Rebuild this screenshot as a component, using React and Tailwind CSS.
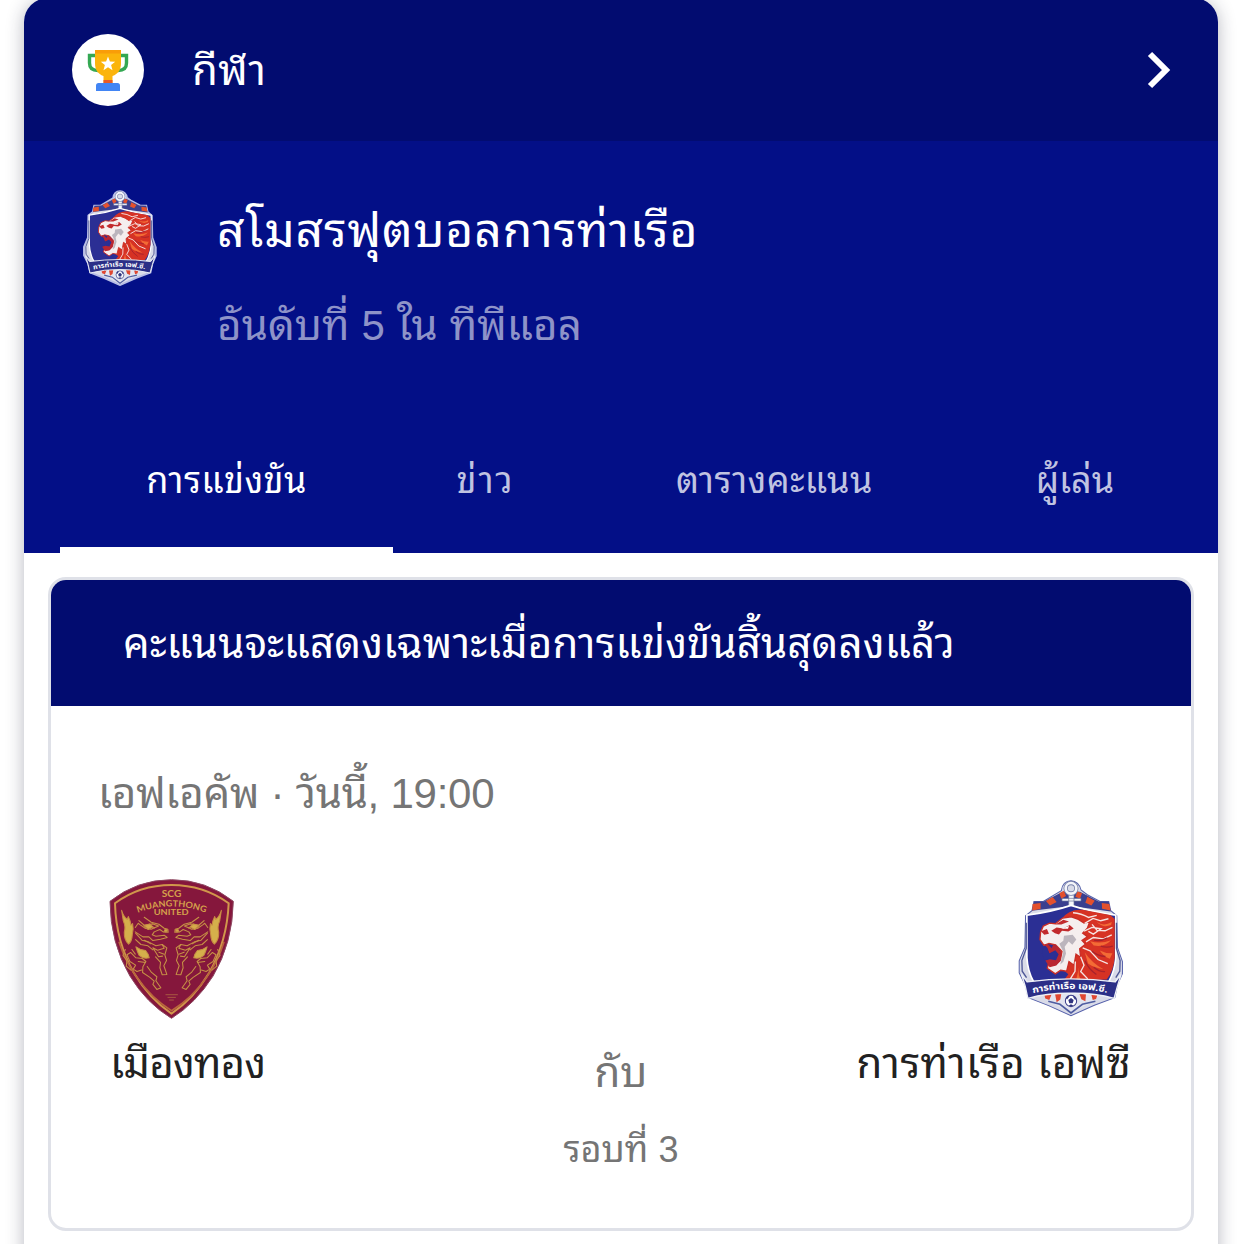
import React from 'react';

const tabs = [
  { label: 'การแข่งขัน', cell: 'w-[333px]', text: 'text-white tracking-[0.4px]', active: true },
  { label: 'ข่าว', cell: 'w-[185px]', text: 'text-[#c0c3e1] tracking-[2px]' },
  { label: 'ตารางคะแนน', cell: 'w-[390px]', text: 'text-[#c0c3e1] tracking-[0.5px] pl-[3px]' },
  { label: 'ผู้เล่น', cell: 'w-[214px]', text: 'text-[#c0c3e1]' },
];

function Trophy() {
  return (
    <svg viewBox="0 0 72 72" className="h-[72px] w-[72px]">
      <circle cx="36" cy="36" r="36" fill="#fff" />
      <path
        d="M25 21.5H17.5V29Q17.5 36.5 26 36.5M47 21.5H54.5V29Q54.5 36.5 46 36.5"
        fill="none"
        stroke="#34a853"
        strokeWidth="3.4"
      />
      <path d="M23 16H49V29C49 36 46 40 40.5 42V49H31.5V42C26 40 23 36 23 29Z" fill="#fbb40b" />
      <path d="M23 16H49V19.5H23Z" fill="#f99d08" />
      <path d="M31.5 46H40.5V49.5H31.5Z" fill="#ea5b25" />
      <path d="M24 57V51.5Q24 49 26.5 49H45.5Q48 49 48 51.5V57Z" fill="#4285f4" />
      <path
        d="M36 22.5L37.9 27.5L43.2 27.8L39.1 31.1L40.5 36.2L36 33.3L31.5 36.2L32.9 31.1L28.8 27.8L34.1 27.5Z"
        fill="#fff"
      />
    </svg>
  );
}

function PortCrest({ className, halo }) {
  return (
    <svg viewBox="52 45 322 413" className={className}>
      <path
        d="M213 50C228 50 240 62 243 78L262 92L300 112H326L332 140L350 155L352 250L367 292V328L352 362L344 400L283 423L213 454L146 424L85 400L76 362L58 326V290L75 250L77 155L96 140L102 112H130L184 80C186 62 197 50 213 50Z"
        fill="#d9dbe8"
        stroke={halo ? '#b7bde6' : '#5560aa'}
        strokeWidth={halo ? 8 : 3}
      />
      <path d="M96 140L103 113L132 112L188 83H240L296 112L326 113L332 142L213 126Z" fill="#3a3f8f" />
      <path
        d="M138 111L158 99L170 114L150 124ZM178 88L192 80L198 96L184 104ZM232 82L246 88L240 104L226 98ZM262 98L284 110L274 124L256 116ZM98 120L122 117L122 135L97 139ZM305 117L328 120L331 139L306 134Z"
        fill="#e4512d"
      />
      <path d="M206 88H222V126H206ZM186 103H243V111H186Z" fill="#f4f5fa" stroke="#667199" strokeWidth="2" />
      <circle cx="213" cy="73" r="16" fill="none" stroke="#7882ab" strokeWidth="13" />
      <circle cx="213" cy="73" r="16" fill="none" stroke="#f4f5fa" strokeWidth="8" />
      <path d="M81 153Q150 145 213 124Q278 145 347 153V280Q344 320 326 352H101Q83 320 81 280Z" fill="#2b2f94" stroke="#fff" strokeWidth="5" />
      <path
        d="M183 166Q206 134 248 137L330 153L344 165V280Q340 320 320 346L190 350L205 330L180 308Z"
        fill="#d63224"
      />
      <path
        d="M122 204L130 186L149 177L166 179L188 162L214 158L235 166L252 177L269 173L262 192L248 207L262 218L246 229L256 240L239 254L242 280L228 270L222 303L207 292L200 321L182 318L166 329L142 312L145 301L162 303L181 288L186 262L167 242L147 238L132 244L120 226Z"
        fill="#f5eeee"
        stroke="#c92d26"
        strokeWidth="4"
      />
      <path
        d="M132 240L142 251L148 268L166 258L176 270L168 288L150 285L136 289L149 309L169 304L181 291L185 268L173 249L160 241L155 252L146 242Z"
        fill="#b92732"
      />
      <path d="M128 246L142 252L148 268L164 262L169 272L160 285L148 282L134 288L126 270Z" fill="#2b2f94" />
      <path
        d="M123 201L141 195L147 209L133 212ZM154 200L170 190L190 193L209 183L221 193L205 202L186 200L177 211L165 207ZM166 181L190 167L207 172L184 181Z"
        fill="#c22a2d"
      />
      <path d="M184 194L207 186L204 194Z" fill="#fff" />
      <path d="M192 215L218 212L229 226L217 242L206 232L194 248L198 268L190 293L181 301L190 263L178 239L190 230Z" fill="#bcb5bd" />
      <path
        d="M219 146Q244 148 265 160L290 154M254 178L279 163L302 170L325 164M252 201L276 190L303 194L280 210L265 202M258 233L280 220L310 224L335 212M248 251L270 260L294 286L323 298M242 278L252 303L242 322L263 344M226 292L225 321L211 344M276 181L291 199L315 200L337 190"
        fill="none"
        stroke="#f6e5e3"
        strokeWidth="4"
      />
      <path
        d="M270 231Q302 240 333 228Q312 250 281 244ZM254 264Q275 296 310 315Q281 311 264 298ZM299 259Q316 268 337 267L329 284Q311 278 299 259ZM238 306Q231 336 246 350L228 348ZM290 174Q311 188 335 174L333 183Q308 193 290 174Z"
        fill="#f36b35"
      />
      <path
        d="M282 228Q302 232 322 221M276 261Q292 275 316 277M255 290Q266 316 289 331M281 309Q297 323 315 322M302 246Q320 252 338 246"
        fill="none"
        stroke="#a8222c"
        strokeWidth="4"
      />
      <path d="M130 389H298L286 408L214 446L142 408Z" fill="#e2e4ef" />
      <path d="M132 386L156 388L148 407L136 403ZM165 388H184L181 406L170 414ZM238 388H258L256 411L244 405ZM273 388L295 383L288 404L278 407Z" fill="#df4731" />
      <path d="M145 411L180 420L213 446L247 420L286 411" fill="none" stroke="#4f5da1" strokeWidth="5" />
      <circle cx="213" cy="410" r="17" fill="#fff" stroke="#373b88" strokeWidth="3" />
      <path d="M213 401L221 407L218 417H208L205 407ZM198 401L204 394L208 397L201 406ZM219 394L228 402L226 408L220 399ZM206 424L213 420L220 424L213 427Z" fill="#30347f" />
      <path
        d="M65 330L82 353Q146 344 213 344Q281 344 345 353L363 330L352 366L342 402Q283 386 213 387Q144 386 84 402L76 366Z"
        fill="#2b2f87"
        stroke="#edf0f6"
        strokeWidth="4"
      />
      <path d="M79 176V253L66 289L67 321L80 340M349 176V253L360 289L359 321L347 340" fill="none" stroke="#4d5796" strokeWidth="4" />
      <path id="bannerArc" d="M99 387Q155 374 212 374Q270 374 327 387" fill="none" />
      <text fill="#fff" fontSize="28" fontWeight="700" fontFamily='"Noto Sans Thai", "Noto Sans", sans-serif'>
        <textPath href="#bannerArc" textLength="224" lengthAdjust="spacingAndGlyphs">
          การท่าเรือ เอฟ.ซี.
        </textPath>
      </text>
    </svg>
  );
}

function Qilin() {
  return (
    <g fill="none" stroke="#c69145" strokeWidth="3.2" strokeLinejoin="round" strokeLinecap="round">
      <path
        d="M96 149Q101 168 113 176L116 168Q123 182 124 194L129 189Q133 207 128 223Q127 242 117 251Q103 238 104 215Q109 199 101 181Z"
        fill="#d5b04b"
        stroke="#c88b43"
      />
      <path d="M137 201L146 188L151 192L168 204L185 206L207 196L190 190L164 194L148 180M164 170L185 185L208 191L224 203L235 206L236 215L221 214L211 207L194 214L188 223L199 227L224 224L233 231L213 236L190 240L178 229L160 229L137 214" />
      <path d="M138 218L157 239L177 244L199 256L218 252L224 263L204 269L190 262L207 289L219 287M190 268L175 256L154 252L138 237" />
      <path d="M218 252L232 262L226 283L231 300L223 316L232 342L218 343L211 322L213 306L198 289" />
      <path d="M199 361L214 382L202 387L190 372L194 362L181 351L159 336L160 319L169 303L158 294L139 292L123 276L112 283L121 303L138 314L131 326L142 333L156 329M173 318L186 336L202 349L199 361" />
      <path d="M139 259Q150 268 168 270Q178 281 179 292Q160 296 149 285Q143 274 139 259Z" fill="#d5b04b" />
      <path d="M107 267L100 285L112 301L110 317L124 329M127 267L137 281M146 303L168 306M208 275L224 281M164 239L184 250M184 196L195 202" />
      <path d="M163 195L180 190L190 199L176 207Z" fill="#d5a94b" />
      <circle cx="229" cy="210" r="4" fill="#d5a94b" />
    </g>
  );
}

function MuangthongCrest() {
  return (
    <svg viewBox="55 50 382 428" className="-ml-[3px] h-[143px] w-[127px]">
      <path d="M61 122Q142 57 246 57Q350 57 432 122Q430 247 371 347Q319 429 246 474Q171 429 121 347Q62 247 61 122Z" fill="#85173c" stroke="#8d4861" strokeWidth="3" />
      <path d="M76 128Q150 73 246 73Q342 73 418 128Q413 243 359 338Q312 416 246 460Q180 416 133 338Q79 243 76 128Z" fill="none" stroke="#d1974b" strokeWidth="6" />
      <path d="M88 244Q107 303 142 351Q187 414 246 451Q307 414 351 351Q386 303 404 244" fill="none" stroke="#b9663c" strokeWidth="5" />
      <g fill="#d5a04b" textAnchor="middle" fontFamily="Lato, sans-serif" fontWeight="700">
        <text x="246" y="110" fontSize="27" textLength="59" lengthAdjust="spacingAndGlyphs">SCG</text>
        <path id="clubArc" d="M141 158Q246 117 352 158" fill="none" />
        <text fontSize="26">
          <textPath href="#clubArc" startOffset="50%" textLength="208" lengthAdjust="spacingAndGlyphs">MUANGTHONG</textPath>
        </text>
        <text x="245" y="164" fontSize="23" textLength="105" lengthAdjust="spacingAndGlyphs">UNITED</text>
      </g>
      <Qilin />
      <g transform="translate(492 0) scale(-1 1)">
        <Qilin />
      </g>
      <path d="M228 403H265M234 411H259M239 419H253" stroke="#a95842" strokeWidth="3" />
    </svg>
  );
}

export default function App() {
  return (
    <div className="h-[1244px] overflow-hidden bg-white px-6 font-['Liberation_Sans','Noto_Sans_Thai_Looped','Loma','Garuda','Waree',sans-serif]">
      <main className="-mt-0.5 h-[1300px] rounded-t-[24px] bg-white shadow-[0_2px_18px_rgba(32,33,60,0.32)]">
        <header className="flex h-[143px] items-center rounded-t-[24px] bg-[#020c70] pt-px pr-[47px] pl-12 text-white">
          <Trophy />
          <h2 className="mt-px ml-12 flex-1 text-[42px] leading-none tracking-[0.4px] whitespace-nowrap">กีฬา</h2>
          <svg viewBox="0 0 24 38" className="h-[38px] w-6" fill="none" stroke="#fff" strokeWidth="6">
            <path d="M3 3L19 19L3 35" />
          </svg>
        </header>

        <section className="flex h-[412px] flex-col bg-[#030f87]">
          <div className="flex h-[269px] pt-[48px] pl-[57px]">
            <PortCrest className="mt-px h-[96px] w-[78px]" halo />
            <div className="ml-[58px] whitespace-nowrap">
              <h1 className="mt-[10px] text-[48px] leading-[64px] tracking-[0.85px] text-white">สโมสรฟุตบอลการท่าเรือ</h1>
              <p className="mt-[33px] text-[42px] leading-[60px] tracking-[0.1px] text-[#8e93c8]">อันดับที่ 5 ใน ทีพีแอล</p>
            </div>
          </div>
          <nav className="flex h-[143px] px-9">
            {tabs.map((tab) => (
              <div key={tab.label} className={`${tab.cell} flex flex-col justify-between`}>
                <span className={`${tab.text} pt-[41px] text-center text-[36px] leading-[60px] whitespace-nowrap`}>
                  {tab.label}
                </span>
                {tab.active && <div className="h-1.5 bg-white" />}
              </div>
            ))}
          </nav>
        </section>

        <section className="mx-6 mt-6 h-[654px] overflow-hidden rounded-[18px] border-[3px] border-[#dfe1e8]">
          <h3 className="h-[126px] bg-[#020c70] pt-[32px] pl-[72px] text-[42px] leading-[64px] tracking-[0.1px] whitespace-nowrap text-white">
            คะแนนจะแสดงเฉพาะเมื่อการแข่งขันสิ้นสุดลงแล้ว
          </h3>
          <p className="mt-[56px] pl-[47px] text-[42px] leading-[64px] tracking-[-0.25px] whitespace-nowrap text-[#757575]">
            เอฟเอคัพ · วันนี้, 19:00
          </p>
          <div className="mt-[51px] flex h-[330px] justify-between pr-[60px] pl-[60px]">
            <div className="w-[275px]">
              <MuangthongCrest />
              <p className="mt-[12px] -ml-px text-[42px] leading-[64px] tracking-[-0.8px] whitespace-nowrap text-[#212121]">
                เมืองทอง
              </p>
            </div>
            <div className="flex flex-col items-center pt-[164px] whitespace-nowrap text-[#757575]">
              <p className="text-[42px] leading-[64px]">กับ</p>
              <p className="mt-[15px] text-[36px] leading-[60px]">รอบที่ 3</p>
            </div>
            <div className="flex w-[275px] flex-col items-end">
              <PortCrest className="mt-[2px] mr-[6px] h-[138px] w-[108px]" />
              <p className="mt-[15px] text-[42px] leading-[64px] tracking-[0.4px] whitespace-nowrap text-[#212121]">
                การท่าเรือ เอฟซี
              </p>
            </div>
          </div>
        </section>
      </main>
    </div>
  );
}
